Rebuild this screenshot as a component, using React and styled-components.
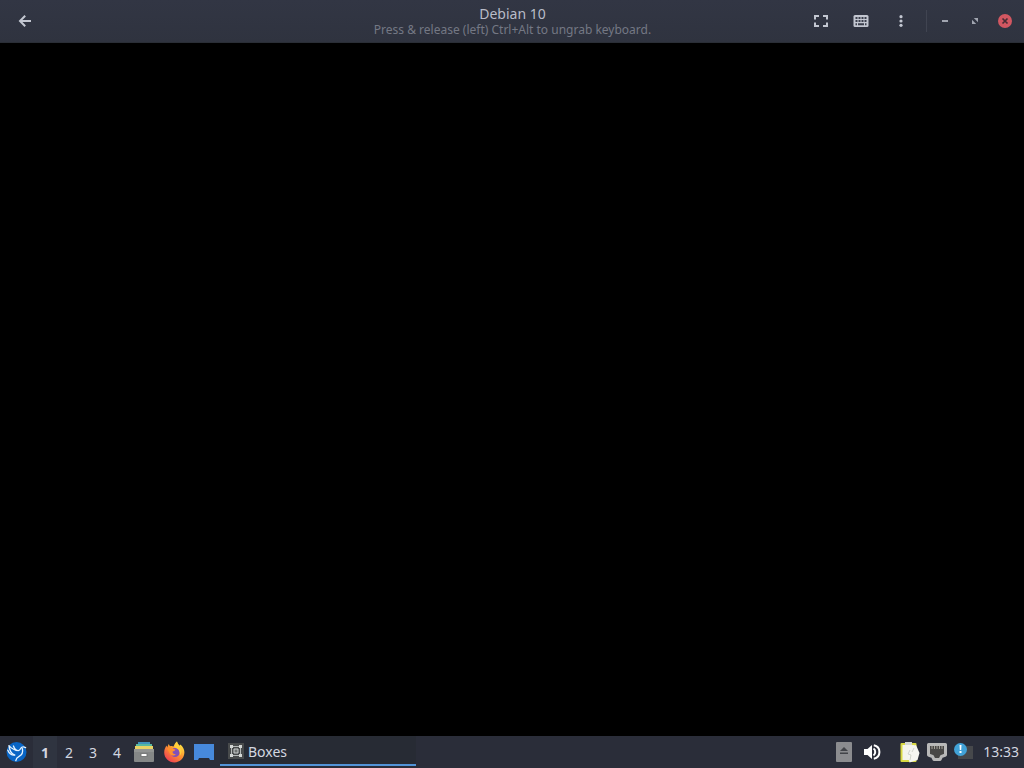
import React, { useState } from 'react';
import styled, { createGlobalStyle } from 'styled-components';

const GlobalStyle = createGlobalStyle`
    * {
        box-sizing: border-box;
    }

    body {
        margin: 0;
        background: #000;
        font-family: "Noto Sans", "Open Sans", sans-serif;
    }

    button {
        border: 0;
        padding: 0;
        background: none;
        color: inherit;
        font: inherit;
        cursor: pointer;
    }

    svg {
        display: block;
    }
`;

const Desktop = styled.div`
    display: flex;
    flex-direction: column;
    min-height: 100vh;
`;

const HeaderBar = styled.header`
    display: grid;
    grid-template-columns: 1fr auto 1fr;
    align-items: center;
    height: 43px;
    padding: 0 4px 0 5px;
    background: linear-gradient(#323644, #2f333f);
    border-bottom: 1px solid #2a2e36;
    color: #c3c7d1;
`;

const HeaderButton = styled.button`
    display: flex;
    align-items: center;
    justify-content: center;
    width: 40px;
    height: 36px;
`;

const Title = styled.div`
    padding-top: 2px;
    text-align: center;

    h1 {
        margin: 0;
        font-size: 14px;
        line-height: 16px;
        font-weight: 400;
        color: #b8bcc8;
    }

    p {
        margin: 0;
        font-size: 12px;
        line-height: 16px;
        color: #747884;
    }
`;

const Controls = styled.div`
    display: flex;
    align-items: center;
    justify-content: flex-end;
`;

const Separator = styled.span`
    width: 1px;
    height: 22px;
    margin: 0 3px 0 5px;
    background: #404451;
`;

const WindowButton = styled.button`
    display: flex;
    align-items: center;
    justify-content: center;
    width: 30px;
    height: 30px;
`;

const Screen = styled.main`
    flex: 1;
    background: #000;
`;

const Panel = styled.footer`
    display: flex;
    align-items: stretch;
    height: 32px;
    background: #2a2d39;
    color: #d3d7e0;
`;

const Launcher = styled.button`
    display: flex;
    align-items: center;
    justify-content: center;
    width: ${props => props.$wide ? '33px' : '30px'};
`;

const Pager = styled.nav`
    display: flex;
`;

const Workspace = styled.button`
    && {
        width: 24px;
        padding-top: 1px;
        font-size: 14px;
        font-weight: ${props => props.$active ? 700 : 400};
        background: ${props => props.$active ? '#2f3440' : 'none'};
    }
`;

const Task = styled.button`
    && {
        display: flex;
        align-items: center;
        gap: 4px;
        width: 196px;
        margin: 0 0 2px 1px;
        padding: 2px 0 0 8px;
        background: #272b34;
        border-bottom: 2px solid #5294d8;
        font-size: 14px;
    }
`;

const Tray = styled.div`
    display: flex;
    align-items: center;
    gap: 10px;
    margin-left: auto;
`;

const TrayGroup = styled.div`
    display: flex;
    gap: ${props => props.$gap || 0}px;
`;

const TrayButton = styled.button`
    display: flex;
    align-items: center;
    justify-content: center;
    width: 27px;
    height: 32px;
`;

const Clock = styled.time`
    padding: 0 5px 0 6px;
    font-size: 14px;
    line-height: 32px;
`;

const BackIcon = () => (
    <svg width="14" height="14" viewBox="0 0 14 14" fill="none" stroke="currentColor" strokeWidth="2">
        <path d="M13 7H2.5M7.2 1.8 2 7l5.2 5.2" />
    </svg>
);

const FullscreenIcon = () => (
    <svg width="14" height="12" viewBox="0 0 14 12" fill="none" stroke="currentColor" strokeWidth="2">
        <path d="M1 4.5V1h4M9 1h4v3.5M13 7.5V11H9M5 11H1V7.5" />
    </svg>
);

const KeyboardIcon = () => (
    <svg width="16" height="12" viewBox="0 0 16 12">
        <rect x=".5" width="15" height="12" rx="1.5" fill="currentColor" />
        <path
            d="M2.5 2h2v2h-2zM5.5 2h2v2h-2zM8.5 2h2v2h-2zM11.5 2h2v2h-2zM2.5 5h2v2h-2zM5.5 5h2v2h-2zM8.5 5h2v2h-2zM11.5 5h2v2h-2zM2.5 8.2h1.5v2H2.5zM5 8.2h6v2H5zM12 8.2h1.5v2H12z"
            fill="#3b3f4c"
        />
    </svg>
);

const MenuIcon = () => (
    <svg width="4" height="12" viewBox="0 0 4 12" fill="currentColor">
        <circle cx="2" cy="1.7" r="1.6" />
        <circle cx="2" cy="6" r="1.6" />
        <circle cx="2" cy="10.3" r="1.6" />
    </svg>
);

const MinimizeIcon = () => (
    <svg width="6" height="2" viewBox="0 0 6 2"><path d="M0 0h6v2H0z" fill="#a1a5b0" /></svg>
);

const RestoreIcon = () => (
    <svg width="8" height="8" viewBox="0 0 8 8" fill="#a1a5b0">
        <path d="M2.8 1H7v4.2zM1 2.8V7h4.2z" />
    </svg>
);

const CloseIcon = () => (
    <svg width="14" height="14" viewBox="0 0 14 14">
        <circle cx="7" cy="7" r="7" fill="#d25761" />
        <path d="m4.5 4.5 5 5m0-5-5 5" stroke="#492c35" strokeWidth="1.7" />
    </svg>
);

const LubuntuIcon = () => (
    <svg width="22" height="22" viewBox="0 0 22 22">
        <circle cx="10.5" cy="11" r="10" fill="#0965c5" />
        <g fill="none" stroke="#e6f3ff" strokeWidth="1.3" strokeLinecap="round" strokeLinejoin="round">
            <path d="M19.6 6.6c-1.8-.9-3.9-.8-4.8.8-.7 1.3-1.2 2.3-2.6 2.2C8.600 9.200 5.600 7.600 3 4.600c.3 4.200 2 7.400 5 9.200" />
            <path d="M1.800 9.200c1.400 3.400 3.600 5 7 4.800M7.400 5c.6 1.900 1.600 3.400 3.200 4.500" />
            <path d="M16.400 7.600c.8 3.700-.4 6.300-3.300 7.700-1.900.9-3 2.200-3.300 4.300" />
        </g>
    </svg>
);

const FilesIcon = () => (
    <svg width="20" height="22" viewBox="0 0 20 22">
        <path d="M4 1h12v3H4z" fill="#3f93bb" />
        <path d="M2 3h16v3H2z" fill="#57b8a0" />
        <path d="M1 5h18v4H1z" fill="#e9d365" />
        <rect y="8" width="20" height="13" rx="1" fill="#858787" />
        <path d="M0 8h20v3H0z" fill="#929493" />
        <rect x="6" y="12" width="8" height="4" rx="1" fill="#7a7c7c" />
        <path d="M7.500 13h5v2h-5z" fill="#fff" />
    </svg>
);

const FirefoxIcon = () => (
    <svg width="22" height="22" viewBox="0 0 22 22">
        <defs>
            <linearGradient id="flame" x1=".8" y1=".1" x2=".2" y2=".9">
                <stop stopColor="#ffe343" />
                <stop offset=".45" stopColor="#ff9530" />
                <stop offset="1" stopColor="#ef4451" />
            </linearGradient>
        </defs>
        <path d="M14 .5c.2 2 1.6 3 2.800 4.200l.6-1.200C20 6 21.400 8.400 21.400 11.300c0 5.700-4.400 10.100-10 10.100S1.200 17.100 1.200 11.500c0-3 1.200-5.500 2.500-7l.4 2L5.700 3l1.300 2.300c1.500-.4 2.400-.2 3.600.3C11.300 3.500 12.300 1.700 14 .5z" fill="url(#flame)" />
        <circle cx="12" cy="11.500" r="4.600" fill="#8350b8" />
        <path d="M4 7.500c2-1.600 4.400-1.500 6 .3l2.400.7c-.3 1.400-1.800 1.600-2.800 2.100-.2 1.600.8 2.700 3.300 2.700-1.500 2.100-5 1.600-6.100-.9z" fill="#ff8f2d" />
        <path d="M14 .5c.2 2.800 3.200 4.500 4.100 7.500.8 2.700.3 4.900-1.200 6.700.5-3.400-.6-6.700-5.100-8.500C11.500 4 12.400 1.900 14 .5z" fill="#ffcf3b" />
    </svg>
);

const DesktopIcon = () => (
    <svg width="20" height="18" viewBox="0 0 20 18">
        <path d="M0 1h20v16h-4l-1-2H5l-1 2H0z" fill="#4789dc" />
    </svg>
);

const BoxesIcon = () => (
    <svg width="16" height="16" viewBox="0 0 16 16">
        <path d="M0 0h16v16H0z" fill="#484b4c" />
        <path d="M3.500 3.500h9v9h-9z" fill="none" stroke="#b5b9b8" />
        <path d="M6 6h4v4H6z" fill="#6f7372" stroke="#c8cccb" />
        <path d="M2 2h3v3H2zM11 2h3v3h-3zM2 11h3v3H2zM11 11h3v3h-3z" fill="#d3d6d5" />
    </svg>
);

const EjectIcon = () => (
    <svg width="16" height="20" viewBox="0 0 16 20">
        <rect width="16" height="20" rx="1" fill="#8b8c8f" />
        <path d="m8 5 4 4H4zM4 10.500h8V12H4z" fill="#424449" />
    </svg>
);

const VolumeIcon = () => (
    <svg width="17" height="16" viewBox="0 0 17 16">
        <path d="M0 5h3.500L8 1v14l-4.500-4H0z" fill="#fff" />
        <path d="M9.500 4.500c2.300 1.600 2.300 5.400 0 7" fill="none" stroke="#fff" strokeWidth="2" />
        <path d="M9.800 1.300c7.500 1.500 7.500 11.900 0 13.400" fill="none" stroke="#fff" strokeWidth="2" />
    </svg>
);

const ClipboardIcon = () => (
    <svg width="20" height="22" viewBox="0 0 20 22">
        <rect x=".5" y="2" width="16" height="19" rx="1" fill="#d9d944" />
        <path d="M2.500 4h12v15h-12z" fill="#f4f4eb" />
        <path d="M5 1h7v3H5z" fill="#d5d8d3" />
        <path d="m9 6 7-2 3.500 8-2 7-8 2.500L7 12z" fill="#f5f5f1" />
        <path d="m10 9-2 4 3 1-1 5M12 11l2-4" fill="none" stroke="#c6cac1" strokeWidth=".8" />
    </svg>
);

const NetworkIcon = () => (
    <svg width="20" height="18" viewBox="0 0 20 18">
        <path d="M1.500 1.500h17v10.500l-4 1.500-1.500 3H7l-1.500-3-4-1.500z" fill="#484746" stroke="#b8b8b8" strokeWidth="3" strokeLinejoin="round" />
        <path d="M5 3v3M7.500 3v3M10 3v3M12.500 3v3M15 3v3" stroke="#a5a39a" />
    </svg>
);

const NotificationIcon = () => (
    <svg width="20" height="18" viewBox="0 0 20 18">
        <path d="M4 3h15v13H4z" fill="#46484b" />
        <circle cx="6.500" cy="6.500" r="6.500" fill="#41a2d7" />
        <path d="M5.500 2h2l-.3 5H5.800zM5.500 8h2v2h-2z" fill="#fff" />
    </svg>
);

const App = () => {
    const [workspace, setWorkspace] = useState(1);

    return (
        <>
            <GlobalStyle />
            <Desktop>
                <HeaderBar>
                    <HeaderButton aria-label="Back"><BackIcon /></HeaderButton>
                    <Title>
                        <h1>Debian 10</h1>
                        <p>Press &amp; release (left) Ctrl+Alt to ungrab keyboard.</p>
                    </Title>
                    <Controls>
                        <HeaderButton aria-label="Fullscreen"><FullscreenIcon /></HeaderButton>
                        <HeaderButton aria-label="Send key combinations"><KeyboardIcon /></HeaderButton>
                        <HeaderButton aria-label="Menu"><MenuIcon /></HeaderButton>
                        <Separator />
                        <WindowButton aria-label="Minimize"><MinimizeIcon /></WindowButton>
                        <WindowButton aria-label="Restore"><RestoreIcon /></WindowButton>
                        <WindowButton aria-label="Close"><CloseIcon /></WindowButton>
                    </Controls>
                </HeaderBar>
                <Screen />
                <Panel>
                    <Launcher $wide aria-label="Applications"><LubuntuIcon /></Launcher>
                    <Pager aria-label="Workspaces">
                        {[1, 2, 3, 4].map(n => (
                            <Workspace key={n} $active={n === workspace} onClick={() => setWorkspace(n)}>{n}</Workspace>
                        ))}
                    </Pager>
                    <Launcher aria-label="Files"><FilesIcon /></Launcher>
                    <Launcher aria-label="Firefox"><FirefoxIcon /></Launcher>
                    <Launcher aria-label="Show desktop"><DesktopIcon /></Launcher>
                    <Task><BoxesIcon />Boxes</Task>
                    <Tray>
                        <TrayGroup $gap={2}>
                            <TrayButton aria-label="Removable media"><EjectIcon /></TrayButton>
                            <TrayButton aria-label="Volume"><VolumeIcon /></TrayButton>
                        </TrayGroup>
                        <TrayGroup>
                            <TrayButton aria-label="Clipboard"><ClipboardIcon /></TrayButton>
                            <TrayButton aria-label="Network"><NetworkIcon /></TrayButton>
                            <TrayButton aria-label="Notifications"><NotificationIcon /></TrayButton>
                            <Clock>13:33</Clock>
                        </TrayGroup>
                    </Tray>
                </Panel>
            </Desktop>
        </>
    );
}

export default App;
